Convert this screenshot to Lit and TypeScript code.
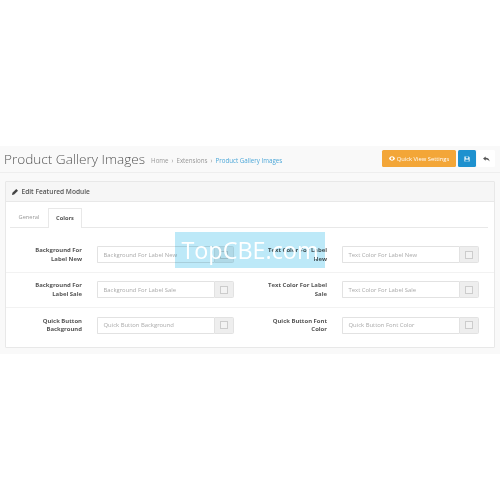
import { LitElement, html, css } from "lit";
import { customElement } from "lit/decorators.js";

const rows = [
  ["Background For Label New", "Text Color For Label New"],
  ["Background For Label Sale", "Text Color For Label Sale"],
  ["Quick Button Background", "Quick Button Font Color"],
];

@customElement("app-root")
export class AppRoot extends LitElement {
  static styles = css`
    :host { display: block; position: relative; width: 500px; height: 500px; background: #fff; overflow: hidden;
      font-family: "Open Sans", "Liberation Sans", sans-serif; color: #666; }
    .page { margin-top: 146px; height: 208px; background: #f9f9f9; filter: blur(0.4px); }
    .head { height: 27px; box-sizing: border-box; padding: 3.5px 5px 0 4px; border-bottom: 1px solid #eee; display: flex; align-items: flex-start; }
    h1 { margin: 0; font-size: 13.6px; font-weight: 300; color: #555; white-space: nowrap; line-height: 17px; }
    .crumbs { margin-left: 6px; font-size: 6.2px; color: #999; display: flex; gap: 3px; padding-top: 6px; white-space: nowrap; }
    .crumbs b { font-weight: 400; color: #1e91cf; opacity: .8; }
    .actions { margin-left: auto; display: flex; gap: 1.5px; padding-top: .5px; }
    .btn { height: 17px; border-radius: 1.5px; display: flex; align-items: center; justify-content: center; color: #fff; font-size: 5.8px; }
    .btn svg { display: block; }
    .quick { width: 74px; background: #f3a638; gap: 2px; }
    .save { width: 18px; background: #1e91cf; }
    .back { width: 18px; background: #fff; color: #555; }
    .panel { margin: 8px 5px 0 4.5px; height: 167px; box-sizing: border-box; background: #fff; border: 1px solid #e8e8e8; border-radius: 1px; }
    .ph { height: 19px; box-sizing: content-box; background: #f6f6f6; border-bottom: 1px solid #e8e8e8; display: flex; align-items: center; gap: 4px; padding-left: 6px; font-size: 6.6px; font-weight: 600; color: #555; }
    .tabs { margin: 5.5px 6.5px 0 4.5px; height: 19px; box-sizing: content-box; border-bottom: 1px solid #e8e8e8; display: flex; font-size: 5.7px; }
    .tab { width: 38px; display: flex; align-items: center; justify-content: center; color: #999; box-sizing: border-box; }
    .tab.on { width: 34px; height: 20px; background: #fff; border: 1px solid #e8e8e8; border-bottom: 0; font-weight: 700; color: #555; }
    .rows { margin-top: 10px; }
    .row { height: 35px; box-sizing: border-box; display: grid; grid-template-columns: 245px 1fr; border-bottom: 1px solid #f2f2f2; }
    .row:last-child { border-bottom: 0; }
    .field { display: flex; align-items: center; }
    .lab { width: 62px; margin-left: 14.5px; text-align: right; font-size: 5.95px; line-height: 8.5px; font-weight: 700; color: #555; }
    .ig { margin-left: 15px; width: 137px; height: 17px; display: flex; box-sizing: border-box; }
    .inp { flex: 1; min-width: 0; border: 1px solid #e2e2e2; border-right: 0; border-radius: 1.5px 0 0 1.5px; background: #fff; font-size: 5.9px; color: #aaa; display: flex; align-items: center; padding-left: 5.5px; white-space: nowrap; }
    .add { width: 20px; background: #eee; border: 1px solid #e2e2e2; box-sizing: border-box; display: flex; align-items: center; justify-content: center; border-radius: 0 1.5px 1.5px 0; }
    .add i { width: 6px; height: 6px; border: 1px solid #ccc; box-sizing: content-box; background: #f3f3f3; }
    .wm { position: absolute; left: 175px; top: 232px; width: 150px; height: 36px; color: #fff;
      font-family: "Open Sans", sans-serif; font-weight: 400; font-size: 23.4px; display: flex; align-items: center; justify-content: center; white-space: nowrap; }
    .wm::before { content: ""; position: absolute; inset: 0; background: #bde9f8; mix-blend-mode: multiply; }
    .wm span { position: relative; }
  `;

  render() {
    return html`
      <div class="page">
        <div class="head">
          <h1>Product Gallery Images</h1>
          <div class="crumbs"><span>Home</span><span>›</span><span>Extensions</span><span>›</span><b>Product Gallery Images</b></div>
          <div class="actions">
            <div class="btn quick">
              <svg width="6" height="5" viewBox="0 0 14 10"><path fill="#fff" d="M7 0C4 0 1.500 2 0 5c1.500 3 4 5 7 5s5.500-2 7-5c-1.500-3-4-5-7-5zm0 8a3 3 0 1 1 0-6 3 3 0 0 1 0 6z"/></svg>
              <span>Quick View Settings</span>
            </div>
            <div class="btn save">
              <svg width="6" height="6" viewBox="0 0 14 14"><path fill="#fff" d="M1 1h10l2 2v10H1zM4 2v4h6V2zM3 8v4h8V8z"/></svg>
            </div>
            <div class="btn back">
              <svg width="7" height="6" viewBox="0 0 16 14"><path fill="#555" d="M6 1 0 6l6 5V8c4 0 7 1 9 5 0-6-3-9-9-9z"/></svg>
            </div>
          </div>
        </div>
        <div class="panel">
          <div class="ph">
            <svg width="6" height="6" viewBox="0 0 14 14"><path fill="#444" d="M10 0l4 4-9 9-5 1 1-5z"/></svg>
            <span>Edit Featured Module</span>
          </div>
          <div class="tabs"><div class="tab">General</div><div class="tab on">Colors</div></div>
          <div class="rows">
            ${rows.map(
              ([a, b]) => html`<div class="row">
                ${[a, b].map(
                  (t) => html`<div class="field">
                    <div class="lab">${t}</div>
                    <div class="ig"><div class="inp">${t}</div><div class="add"><i></i></div></div>
                  </div>`
                )}
              </div>`
            )}
          </div>
        </div>
      </div>
      <div class="wm"><span>TopCBE.com</span></div>
    `;
  }
}
